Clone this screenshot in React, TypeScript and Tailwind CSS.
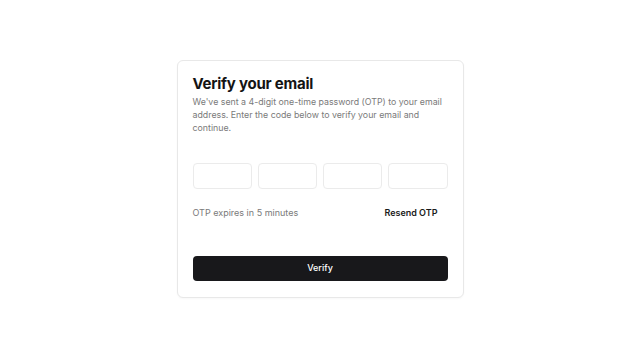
import { useState } from 'react';

export default function App() {
  const [digits, setDigits] = useState(['', '', '', '']);

  return (
    <div
      className="flex h-[357px] w-full items-center justify-center bg-white"
      style={{ fontFamily: 'Inter, "Noto Sans", sans-serif' }}
    >
      <div className="flex w-[287px] flex-col rounded-md border border-[#e8e8e8] bg-white px-[15px] pt-[13px] pb-4 shadow-[0_1px_2px_rgba(0,0,0,0.03)]">
        <h1 className="text-[15px] font-bold leading-[20px] tracking-[-0.015em] text-[#141414]">
          Verify your email
        </h1>
        <p className="mt-[1px] text-[8.8px] leading-[13px] text-[#7a7a7a]">
          We've sent a 4-digit one-time password (OTP) to your email address. Enter the code below to verify your email and continue.
        </p>

        <div className="mt-[29px] grid grid-cols-4 gap-[6px]">
          {digits.map((d, i) => (
            <input
              key={i}
              value={d}
              maxLength={1}
              onChange={(e) => {
                const next = [...digits];
                next[i] = e.target.value;
                setDigits(next);
              }}
              className="h-[26px] w-full rounded-[4px] border border-[#ebebeb] text-center text-sm outline-none"
            />
          ))}
        </div>

        <div className="mt-[18px] flex items-center justify-between">
          <span className="text-[9px] leading-[12px] text-[#7a7a7a]">OTP expires in 5 minutes</span>
          <button type="button" className="px-[10px] text-[9px] font-semibold leading-[12px] text-[#1a1a1a]">
            Resend OTP
          </button>
        </div>

        <button
          type="button"
          className="mt-[37px] h-[25px] w-full rounded-[4px] bg-[#18181b] text-[9px] font-medium text-white"
        >
          Verify
        </button>
      </div>
    </div>
  );
}
